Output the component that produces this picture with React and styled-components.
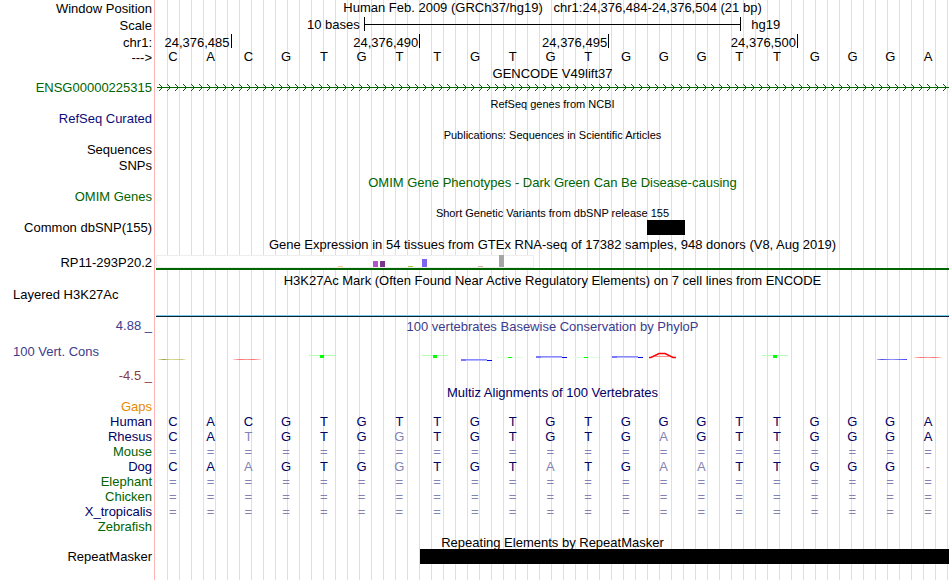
import styled, { createGlobalStyle } from "styled-components"

const GlobalStyle = createGlobalStyle`
    body {
        margin: 0;
        background: #fff;
        color: #000;
        font-family: "Liberation Sans", Arial, sans-serif;
        font-size: 13px;
        line-height: 15px;
    }
`

const INK = {
    black: '#000',
    green: '#006400',
    navy: '#000064',
    curated: '#0c0c78',
    orange: '#e68a00',
    cons: '#3c3c8c',
    consLow: '#8c3c3c',
    faded: '#8282b4'
}

/* pink divider next to the labels, then a guide line every 12px */
const Browser = styled.main`
    box-sizing: border-box;
    min-height: 100vh;
    overflow: hidden;
    background:
        linear-gradient(#ffb4b4, #ffb4b4) 154px 0 / 1px 100% no-repeat,
        repeating-linear-gradient(to right, transparent 0 11px, #dcdcf5 11px 12px) 156px 0 / 100% 100% no-repeat;
`

const Row = styled.div`
    display: grid;
    grid-template-columns: 152px minmax(0, 1fr);
    column-gap: 4px;
    padding-right: 1px;
    height: ${props => props.$h || 15}px;
`

const Label = styled.div`
    text-align: right;
    white-space: pre;
    line-height: ${props => props.$line || 15}px;
    color: ${props => props.$color || INK.black};
`

const SideLabel = styled(Label)`
    text-align: left;
    padding-left: 13px;
`

const ConsLabels = styled.div`
    display: flex;
    flex-direction: column;
    gap: 9px;
`

const Title = styled.h2`
    margin: 0;
    grid-column: 2;
    text-align: center;
    white-space: pre;
    font-weight: normal;
    font-size: ${props => props.$small ? 11 : 13}px;
    line-height: ${props => props.$line || 15}px;
    color: ${props => props.$color || INK.black};
`

const BaseGrid = styled.div`
    display: grid;
    grid-template-columns: repeat(21, minmax(0, 1fr));
`

const Base = styled.span`
    text-align: center;
    padding-right: 4px;
    line-height: 14px;
`

const Position = styled.span`
    grid-column: 1 / ${props => props.$end};
    grid-row: 1;
    justify-self: end;
    height: 14px;
    margin-top: 1px;
    line-height: 17px;
    padding-right: 1px;
    border-right: 1px solid #000;
`

const Block = styled.div`
    grid-column: ${props => props.$from} / ${props => props.$to};
    height: 15px;
    background: #000;
`

const ScaleBar = styled.div`
    display: grid;
    grid-template-columns: 1fr 47.6% 1fr;
    line-height: 17px;

    span:first-child {
        text-align: right;
        padding-right: 4px;
    }
    span:last-child {
        padding-left: 10px;
    }
`

const Ruler = styled.div`
    box-sizing: border-box;
    height: 14px;
    margin-top: 1px;
    border: solid #000;
    border-width: 0 1px;
    background: linear-gradient(#000, #000) 0 7px / 100% 1px no-repeat;
`

const Drawing = styled.svg`
    display: block;
    width: 100%;
    height: ${props => props.$h}px;
`

const Alignment = styled.table`
    width: calc(100% - 1px);
    table-layout: fixed;
    border-collapse: collapse;

    th, td {
        height: 15px;
        padding: 0 4px 0 0;
        font-weight: normal;
        text-align: center;
    }
    th {
        width: 152px;
        text-align: right;
    }
`

const Species = styled.th`
    color: ${props => props.$color};
`

const Cell = styled.td`
    color: ${props => props.$faded ? INK.faded : INK.navy};
`

const SEQUENCE = 'CACGTGTTGTGTGGGTTGGGA'
const GAP = '='.repeat(21)

const POSITIONS = [
    { text: '24,376,485', end: 3 },
    { text: '24,376,490', end: 8 },
    { text: '24,376,495', end: 13 },
    { text: '24,376,500', end: 18 }
]

const SPECIES = [
    { name: 'Gaps', color: INK.orange, bases: '' },
    { name: 'Human', color: INK.navy, bases: SEQUENCE },
    { name: 'Rhesus', color: INK.navy, bases: 'CATGTGGTGTGTGAGTTGGGA' },
    { name: 'Mouse', color: INK.green, bases: GAP },
    { name: 'Dog', color: INK.navy, bases: 'CAAGTGGTGTATGAATTGGG-' },
    { name: 'Elephant', color: INK.green, bases: GAP },
    { name: 'Chicken', color: INK.green, bases: GAP },
    { name: 'X_tropicalis', color: INK.navy, bases: GAP },
    { name: 'Zebrafish', color: INK.green, bases: '' }
]

const TISSUES = [
    { x: 182, h: 1, color: '#ffc888' },
    { x: 217, h: 6, color: '#b452cd' },
    { x: 224, h: 6, color: '#7a378b' },
    { x: 252, h: 1, color: '#9acd32' },
    { x: 266, h: 8, color: '#7a67ee' },
    { x: 322, h: 1, color: '#d8b09a' },
    { x: 343, h: 12, color: '#a6a6a6' }
]

function GeneArrows() {
    return (
        <Drawing $h={15}>
            <defs>
                <pattern id="arrow" width="8" height="15" patternUnits="userSpaceOnUse">
                    <path d="M3 4h1v1h1v1h1v1h1v1h-1v1h-1v1h-1v1h-1v-1h1v-1h1v-1h1v-1h-1v-1h-1v-1h-1z" fill={INK.green} />
                </pattern>
            </defs>
            <rect width="100%" height="15" fill="url(#arrow)" />
            <rect x="1" y="7" width="100%" height="1" fill={INK.green} />
        </Drawing>
    )
}

function Expression() {
    return (
        <Drawing $h={19} viewBox="0 0 793 19" preserveAspectRatio="none" shapeRendering="crispEdges">
            <rect x="0" y="4" width="378" height="13" fill="#eee" />
            <rect x="1" y="5" width="376" height="11" fill="#fff" />
            {TISSUES.map(t => <rect key={t.x} x={t.x} y={16 - t.h} width="5" height={t.h} fill={t.color} />)}
            <rect x="0" y="17" width="793" height="2" fill={INK.green} />
        </Drawing>
    )
}

function FlatT({ x, y, h, light }) {
    return (
        <g>
            <rect x={x} y={y} width="26" height="1" fill={light} />
            <rect x={x + 11} y={y} width="4" height={h} fill="#00ff00" />
        </g>
    )
}

function FlatG({ x, y }) {
    return (
        <g>
            <rect x={x + 2} y={y} width="24" height="1" fill="#8a8aff" />
            <rect x={x} y={y + 1} width="28" height="1" fill="#b4b4ff" />
            <rect x={x} y={y} width="5" height="2" fill="#7878ff" />
            <rect x={x + 26} y={y + 1} width="5" height="1" fill="#0000e6" />
        </g>
    )
}

function Conservation() {
    return (
        <Drawing $h={48} viewBox="0 0 793 48" preserveAspectRatio="none">
            <defs>
                <linearGradient id="olive">
                    <stop offset="0" stopColor="#b4b45a" stopOpacity="0.3" />
                    <stop offset="0.2" stopColor="#a0a03c" />
                    <stop offset="0.45" stopColor="#dcdca0" />
                    <stop offset="0.85" stopColor="#c8c878" />
                    <stop offset="1" stopColor="#c8c878" stopOpacity="0.2" />
                </linearGradient>
                <linearGradient id="red">
                    <stop offset="0" stopColor="#ff5050" stopOpacity="0.2" />
                    <stop offset="0.25" stopColor="#ff6e6e" />
                    <stop offset="0.5" stopColor="#ffa0a0" />
                    <stop offset="0.7" stopColor="#ff6e6e" />
                    <stop offset="1" stopColor="#ff5050" stopOpacity="0.2" />
                </linearGradient>
                <linearGradient id="blue">
                    <stop offset="0" stopColor="#5050ff" stopOpacity="0.4" />
                    <stop offset="0.15" stopColor="#5050e6" />
                    <stop offset="0.5" stopColor="#9696ff" />
                    <stop offset="1" stopColor="#4646f0" />
                </linearGradient>
            </defs>
            <rect x="2" y="23" width="28" height="1" fill="url(#olive)" />
            <rect x="77" y="23" width="28" height="1" fill="url(#red)" />
            <FlatT x={153} y={19} h={3} light="#b4ffb4" />
            <FlatT x={266} y={19} h={3} light="#b4ffb4" />
            <FlatG x={305} y={23} />
            <FlatT x={341} y={21} h={1} light="#dcffdc" />
            <FlatG x={380} y={20} />
            <FlatT x={417} y={21} h={1} light="#dcffdc" />
            <FlatG x={456} y={20} />
            <path d="M493 21.5h2l8-4h6l8 4h3" fill="none" stroke="#f00" strokeWidth="1.5" />
            <path d="M499 20.5h14" stroke="#ff8c8c" strokeWidth="1" />
            <FlatT x={606} y={19} h={3} light="#b4ffb4" />
            <rect x="721" y="23" width="30" height="1" fill="url(#blue)" />
            <rect x="758" y="21" width="28" height="1" fill="url(#red)" />
        </Drawing>
    )
}

const HistogramBase = styled.div`
    align-self: end;
    height: 1px;
    border-top: 1px solid #78c8f0;
    background: #10202c;
`

function TitleRow({ h, line, small, color, children }) {
    return (
        <Row $h={h}>
            <Title $line={line || h} $small={small} $color={color}>{children}</Title>
        </Row>
    )
}

export default function App() {
    return (
        <>
            <GlobalStyle />
            <Browser>
                <Row $h={16}>
                    <Label $line={17}>Window Position</Label>
                    <Title>{'Human Feb. 2009 (GRCh37/hg19)   chr1:24,376,484-24,376,504 (21 bp)'}</Title>
                </Row>
                <Row $h={17}>
                    <Label $line={19}>Scale</Label>
                    <ScaleBar>
                        <span>10 bases</span>
                        <Ruler />
                        <span>hg19</span>
                    </ScaleBar>
                </Row>
                <Row $h={17}>
                    <Label $line={19}>chr1:</Label>
                    <BaseGrid>
                        {POSITIONS.map(p => <Position key={p.end} $end={p.end}>{p.text}</Position>)}
                    </BaseGrid>
                </Row>
                <Row>
                    <Label>{'--->'}</Label>
                    <BaseGrid>
                        {SEQUENCE.split('').map((base, index) => <Base key={index}>{base}</Base>)}
                    </BaseGrid>
                </Row>

                <TitleRow h={15} line={17}>GENCODE V49lift37</TitleRow>
                <Row>
                    <Label $color={INK.green}>ENSG00000225315</Label>
                    <GeneArrows />
                </Row>

                <TitleRow h={16} line={18} small>RefSeq genes from NCBI</TitleRow>
                <Row>
                    <Label $color={INK.curated}>RefSeq Curated</Label>
                </Row>

                <TitleRow h={16} line={18} small>Publications: Sequences in Scientific Articles</TitleRow>
                <Row>
                    <Label>Sequences</Label>
                </Row>
                <Row $h={16}>
                    <Label $line={17}>SNPs</Label>
                </Row>

                <TitleRow h={16} line={19} color={INK.green}>OMIM Gene Phenotypes - Dark Green Can Be Disease-causing</TitleRow>
                <Row>
                    <Label $color={INK.green}>OMIM Genes</Label>
                </Row>

                <TitleRow h={16} line={18} small>Short Genetic Variants from dbSNP release 155</TitleRow>
                <Row>
                    <Label>Common dbSNP(155)</Label>
                    <BaseGrid>
                        <Block $from={14} $to={15} />
                    </BaseGrid>
                </Row>

                <TitleRow h={16} line={19}>Gene Expression in 54 tissues from GTEx RNA-seq of 17382 samples, 948 donors (V8, Aug 2019)</TitleRow>
                <Row $h={19}>
                    <Label $line={23}>RP11-293P20.2</Label>
                    <Expression />
                </Row>

                <TitleRow h={17} line={21}>H3K27Ac Mark (Often Found Near Active Regulatory Elements) on 7 cell lines from ENCODE</TitleRow>
                <Row $h={30}>
                    <SideLabel>Layered H3K27Ac</SideLabel>
                    <HistogramBase />
                </Row>

                <Row $h={68}>
                    <ConsLabels>
                        <Label $color={INK.cons} $line={18}>4.88 _</Label>
                        <SideLabel $color={INK.cons}>100 Vert. Cons</SideLabel>
                        <Label $color={INK.consLow}>-4.5 _</Label>
                    </ConsLabels>
                    <div>
                        <Title $color={INK.cons} $line={19}>100 vertebrates Basewise Conservation by PhyloP</Title>
                        <Conservation />
                    </div>
                </Row>

                <TitleRow h={14} line={16} color={INK.navy}>Multiz Alignments of 100 Vertebrates</TitleRow>
                <Alignment>
                    <tbody>
                        {SPECIES.map(({ name, color, bases }) => (
                            <tr key={name}>
                                <Species scope="row" $color={color}>{name}</Species>
                                {SEQUENCE.split('').map((human, index) => (
                                    <Cell key={index} $faded={bases[index] !== human}>{bases[index]}</Cell>
                                ))}
                            </tr>
                        ))}
                    </tbody>
                </Alignment>

                <TitleRow h={15} line={17}>Repeating Elements by RepeatMasker</TitleRow>
                <Row>
                    <Label>RepeatMasker</Label>
                    <BaseGrid>
                        <Block $from={8} $to={22} />
                    </BaseGrid>
                </Row>
            </Browser>
        </>
    )
}
